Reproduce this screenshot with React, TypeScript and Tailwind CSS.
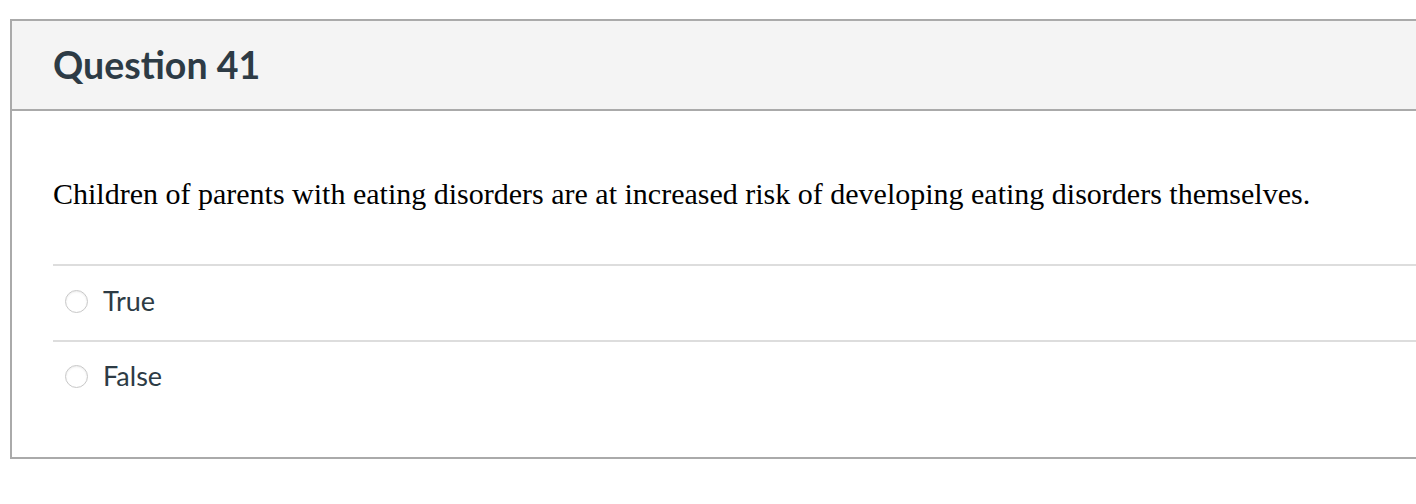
export default function App() {
  const answers = ['True', 'False']

  return (
    <div className="min-h-[504px] w-[1416px] overflow-hidden bg-white pl-[10px] pt-[19px]">
      <div className="w-[1440px] border-y-2 border-l-2 border-[#aaaaaa] bg-white">
        {/* header */}
        <div className="flex h-[90px] items-center border-b-2 border-[#aaaaaa] bg-[#f4f4f4] pl-[41px]">
          <h2 className="text-[37.5px] font-bold leading-none text-[#2d3b45] [font-family:Lato,sans-serif]">
            Question 41
          </h2>
        </div>

        {/* body */}
        <div className="pb-[43px] pl-[41px] pt-[66px]">
          <p className="text-[30px] leading-[34px] text-black [font-family:'Liberation_Serif',serif]">
            Children of parents with eating disorders are at increased risk of developing eating disorders themselves.
          </p>
          <div className="mt-[53px] border-t-2 border-[#dddddd]">
            {answers.map((a, i) => (
              <label
                key={a}
                className={`flex h-[74px] items-center gap-[15px] pl-[12px] ${i > 0 ? 'border-t-2 border-[#dddddd]' : ''}`}
              >
                <span className="-mt-[4px] h-[23px] w-[23px] rounded-full border border-[#c8c8c8] bg-white shadow-[inset_0_1px_2px_rgba(0,0,0,0.08)]" />
                <span className="-mt-[4px] text-[27px] text-[#2d3b45] [font-family:Lato,sans-serif]">{a}</span>
              </label>
            ))}
          </div>
        </div>
      </div>
    </div>
  )
}
